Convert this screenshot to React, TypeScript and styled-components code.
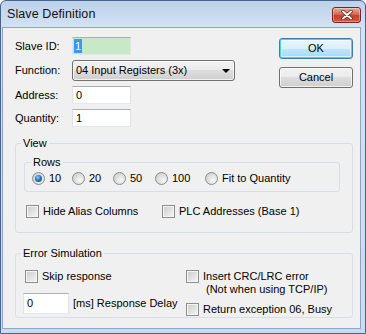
import React from "react";
import styled, { createGlobalStyle } from "styled-components";

const Global = createGlobalStyle`
  html, body { margin: 0; padding: 0; background: #fff; }
  body {
    font-family: "Liberation Sans", Arial, sans-serif;
    font-size: 11px;
    line-height: 13px;
    color: #000;
  }
  #root { width: 366px; height: 334px; }
`;

const Window = styled.div`
  width: 366px;
  height: 334px;
  box-sizing: border-box;
  display: flex;
  flex-direction: column;
  border: 1px solid #44658c;
  border-radius: 6px 6px 0 0;
  background: linear-gradient(#bcd1ea, #d3e2f3 26px, #c9dbf0);
  overflow: hidden;
`;

const TitleBar = styled.div`
  height: 26px;
  flex: none;
  display: flex;
  align-items: center;
  justify-content: space-between;
  padding: 1px 4px 0 6px;
  box-sizing: border-box;
`;

const Title = styled.span`
  font-family: "Liberation Sans", Arial, sans-serif;
  font-size: 12.5px;
  color: #111;
  letter-spacing: 0.1px;
`;

const CloseButton = styled.div`
  width: 29px;
  height: 16px;
  box-sizing: border-box;
  border: 1px solid #6e2a22;
  border-radius: 3px;
  background: linear-gradient(#e8a99a, #d56a55 45%, #c2402a 55%, #d25a3e);
  box-shadow: inset 0 0 0 1px rgba(255, 255, 255, 0.35);
  display: flex;
  align-items: center;
  justify-content: center;
`;

const Client = styled.div`
  flex: 1;
  margin: 0 4px 4px 1px;
  background: #f0f0f0;
  border: 1px solid #8ea6c4;
  padding: 9px 7px 0 12px;
  display: flex;
  flex-direction: column;
`;

const TopSection = styled.div`
  display: flex;
  justify-content: space-between;
`;

const Form = styled.div`
  display: grid;
  grid-template-columns: 57px auto;
  grid-template-rows: 18px 21px 18px 18px;
  row-gap: 5px;
  align-items: center;
`;

const FieldLabel = styled.span`
  white-space: nowrap;
`;

const TextBox = styled.div<{ $w: number; $bg?: string }>`
  width: ${(p) => p.$w}px;
  height: 18px;
  box-sizing: border-box;
  border: 1px solid #e2e3ea;
  border-top-color: #abadb3;
  border-bottom-color: #e3e9ef;
  background: ${(p) => p.$bg || "#fff"};
  padding: 0 3px;
  display: flex;
  align-items: center;
`;

const Selected = styled.span`
  background: #3399ff;
  color: #fff;
  padding: 0 1px;
  margin-left: -2px;
  line-height: 14px;
`;

const Combo = styled.div`
  width: 163px;
  height: 21px;
  box-sizing: border-box;
  border: 1px solid #707070;
  border-radius: 3px;
  background: linear-gradient(#f2f2f2, #ebebeb 50%, #dddddd 50%, #cfcfcf);
  box-shadow: inset 0 0 0 1px rgba(255, 255, 255, 0.7);
  display: flex;
  align-items: center;
  justify-content: space-between;
  padding: 0 4px 0 3px;
`;

const Arrow = styled.span`
  width: 0;
  height: 0;
  border-left: 4px solid transparent;
  border-right: 4px solid transparent;
  border-top: 4px solid #000;
`;

const ButtonColumn = styled.div`
  display: flex;
  flex-direction: column;
  gap: 8px;
  padding-top: 1px;
`;

const Button = styled.div<{ $default?: boolean }>`
  width: 74px;
  height: 21px;
  box-sizing: border-box;
  border-radius: 3px;
  display: flex;
  align-items: center;
  justify-content: center;
  border: 1px solid ${(p) => (p.$default ? "#3c7fb1" : "#707070")};
  background: ${(p) =>
    p.$default
      ? "linear-gradient(#eaf6fd, #d9f0fc 50%, #bee6fd 50%, #a7d9f5)"
      : "linear-gradient(#f2f2f2, #ebebeb 50%, #dddddd 50%, #cfcfcf)"};
  box-shadow: ${(p) =>
    p.$default
      ? "inset 0 0 0 1px #48d0f8, inset 0 0 0 2px rgba(255,255,255,0.6)"
      : "inset 0 0 0 1px rgba(255,255,255,0.7)"};
`;

const Group = styled.fieldset<{ $mt: number }>`
  margin: ${(p) => p.$mt}px 0 0 0;
  padding: 0;
  border: 1px solid #d5dfe5;
  border-radius: 3px;
  min-width: 0;
`;

const Legend = styled.legend<{ $ml: number }>`
  margin-left: ${(p) => p.$ml}px;
  padding: 0 2px;
  line-height: 13px;
`;

const ViewBody = styled.div`
  padding: 6px 12px 14px 8px;
`;

const RadioRow = styled.div`
  display: grid;
  grid-template-columns: 40px 41px 42px 50px auto;
  padding: 3px 0 6px 7px;
`;

const CheckRow = styled.div`
  display: grid;
  grid-template-columns: 136px auto;
  padding: 13px 0 0 2px;
`;

const Option = styled.div`
  display: flex;
  align-items: flex-start;
  gap: 4px;
  white-space: nowrap;
`;

const RadioCircle = styled.span<{ $checked?: boolean }>`
  width: 13px;
  height: 13px;
  flex: none;
  box-sizing: border-box;
  border-radius: 50%;
  border: 1px solid #8c8c8c;
  background: radial-gradient(circle at 65% 65%, #f8f8f8, #d4d4d4 70%, #c0c0c0);
  display: flex;
  align-items: center;
  justify-content: center;
  &::after {
    content: "";
    display: ${(p) => (p.$checked ? "block" : "none")};
    width: 7px;
    height: 7px;
    border-radius: 50%;
    background: radial-gradient(circle at 40% 35%, #8fd0ff, #2a78bf 45%, #0c3e73);
  }
`;

const CheckBox = styled.span`
  width: 13px;
  height: 13px;
  flex: none;
  box-sizing: border-box;
  border: 1px solid #8e8f8f;
  background: linear-gradient(135deg, #cbcbcb, #f6f6f6);
  box-shadow: inset 0 0 0 1px #f4f4f4;
`;

const ErrorBody = styled.div`
  display: grid;
  grid-template-columns: 163px auto;
  padding: 10px 0 1px 7px;
`;

const Column = styled.div<{ $gap: number }>`
  display: flex;
  flex-direction: column;
  gap: ${(p) => p.$gap}px;
`;

const Indented = styled.div`
  padding-left: 2px;
`;

const DelayRow = styled.div`
  display: flex;
  align-items: center;
  gap: 4px;
  white-space: nowrap;
`;

const DelayBox = styled(TextBox)`
  height: 21px;
`;

const Lines = styled.div`
  display: flex;
  flex-direction: column;
`;

const SubLine = styled.span`
  padding-left: 3px;
`;

const Radio = ({ label, checked }: { label: string; checked?: boolean }) => (
  <Option>
    <RadioCircle $checked={checked} />
    <span>{label}</span>
  </Option>
);

const Check = ({ children }: { children: React.ReactNode }) => (
  <Option>
    <CheckBox />
    {children}
  </Option>
);

export default function App() {
  return (
    <>
      <Global />
      <Window>
        <TitleBar>
          <Title>Slave Definition</Title>
          <CloseButton>
            <svg width="12" height="10" viewBox="0 0 12 10">
              <path
                d="M2 1.5 L10 8.5 M10 1.5 L2 8.5"
                stroke="#5a1d14"
                strokeWidth="3.4"
                strokeLinecap="round"
              />
              <path
                d="M2 1.5 L10 8.5 M10 1.5 L2 8.5"
                stroke="#fff"
                strokeWidth="2"
                strokeLinecap="round"
              />
            </svg>
          </CloseButton>
        </TitleBar>
        <Client>
          <TopSection>
            <Form>
              <FieldLabel>Slave ID:</FieldLabel>
              <TextBox $w={59} $bg="#c8e9c8">
                <Selected>1</Selected>
              </TextBox>
              <FieldLabel>Function:</FieldLabel>
              <Combo>
                <span>04 Input Registers (3x)</span>
                <Arrow />
              </Combo>
              <FieldLabel>Address:</FieldLabel>
              <TextBox $w={59}>0</TextBox>
              <FieldLabel>Quantity:</FieldLabel>
              <TextBox $w={59}>1</TextBox>
            </Form>
            <ButtonColumn>
              <Button $default>OK</Button>
              <Button>Cancel</Button>
            </ButtonColumn>
          </TopSection>

          <Group $mt={10}>
            <Legend $ml={5}>View</Legend>
            <ViewBody>
              <Group $mt={0}>
                <Legend $ml={6}>Rows</Legend>
                <RadioRow>
                  <Radio label="10" checked />
                  <Radio label="20" />
                  <Radio label="50" />
                  <Radio label="100" />
                  <Radio label="Fit to Quantity" />
                </RadioRow>
              </Group>
              <CheckRow>
                <Check>
                  <span>Hide Alias Columns</span>
                </Check>
                <Check>
                  <span>PLC Addresses (Base 1)</span>
                </Check>
              </CheckRow>
            </ViewBody>
          </Group>

          <Group $mt={14}>
            <Legend $ml={5}>Error Simulation</Legend>
            <ErrorBody>
              <Column $gap={10}>
                <Indented>
                  <Check>
                    <span>Skip response</span>
                  </Check>
                </Indented>
                <DelayRow>
                  <DelayBox $w={46}>0</DelayBox>
                  <span>[ms] Response Delay</span>
                </DelayRow>
              </Column>
              <Column $gap={7}>
                <Check>
                  <Lines>
                    <span>Insert CRC/LRC error</span>
                    <SubLine>(Not when using TCP/IP)</SubLine>
                  </Lines>
                </Check>
                <Check>
                  <span>Return exception 06, Busy</span>
                </Check>
              </Column>
            </ErrorBody>
          </Group>
        </Client>
      </Window>
    </>
  );
}
